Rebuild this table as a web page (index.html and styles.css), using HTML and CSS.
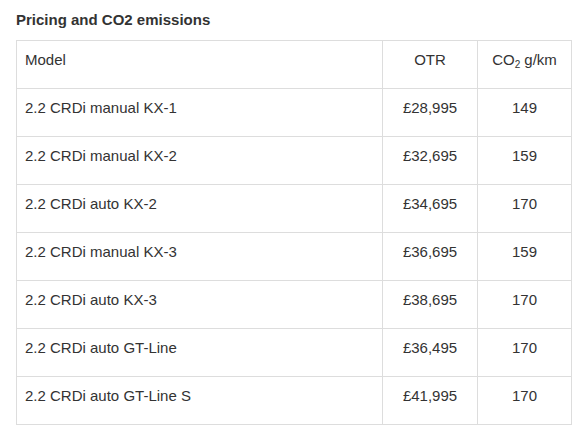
FILE: index.html
```html
<!DOCTYPE html>
<html lang="en">
<head>
    <meta charset="UTF-8">
    <meta name="viewport" content="width=device-width, initial-scale=1.0">
    <title>Pricing and CO2 emissions</title>
    <link rel="stylesheet" href="styles.css">
</head>
<body>
    <div class="pricing">
        <h3 class="title">Pricing and CO2 emissions</h3>
        <table class="spec-table">
            <colgroup>
                <col class="col-model">
                <col class="col-otr">
                <col class="col-co2">
            </colgroup>
            <tr>
                <td>Model</td>
                <td class="num">OTR</td>
                <td class="num">CO<sub>2</sub> g/km</td>
            </tr>
            <tr>
                <td>2.2 CRDi manual KX-1</td>
                <td class="num">£28,995</td>
                <td class="num">149</td>
            </tr>
            <tr>
                <td>2.2 CRDi manual KX-2</td>
                <td class="num">£32,695</td>
                <td class="num">159</td>
            </tr>
            <tr>
                <td>2.2 CRDi auto KX-2</td>
                <td class="num">£34,695</td>
                <td class="num">170</td>
            </tr>
            <tr>
                <td>2.2 CRDi manual KX-3</td>
                <td class="num">£36,695</td>
                <td class="num">159</td>
            </tr>
            <tr>
                <td>2.2 CRDi auto KX-3</td>
                <td class="num">£38,695</td>
                <td class="num">170</td>
            </tr>
            <tr>
                <td>2.2 CRDi auto GT-Line</td>
                <td class="num">£36,495</td>
                <td class="num">170</td>
            </tr>
            <tr>
                <td>2.2 CRDi auto GT-Line S</td>
                <td class="num">£41,995</td>
                <td class="num">170</td>
            </tr>
        </table>
    </div>
</body>
</html>
```

FILE: styles.css
```css
body {
    margin: 0;
    font-family: "Liberation Sans", Arial, sans-serif;
    color: #333;
    background-color: #fff;
}

.pricing {
    padding: 10px 0 0 16px;
    width: 555px;
}

.title {
    font-size: 15px;
    font-weight: bold;
    line-height: 20px;
    margin: 0 0 10px 0;
    color: #333;
}

.spec-table {
    width: 555px;
    border-collapse: collapse;
    table-layout: fixed;
    font-size: 15px;
    line-height: 20px;
}

.col-model {
    width: 366px;
}

.col-otr {
    width: 95px;
}

.col-co2 {
    width: 94px;
}

.spec-table td {
    border: 1px solid #ddd;
    padding: 9px 8px 18px 8px;
    height: 20px;
    vertical-align: top;
}

.spec-table .num {
    text-align: center;
}

.spec-table sub {
    font-size: 10px;
    line-height: 0;
    vertical-align: -3px;
}
```
